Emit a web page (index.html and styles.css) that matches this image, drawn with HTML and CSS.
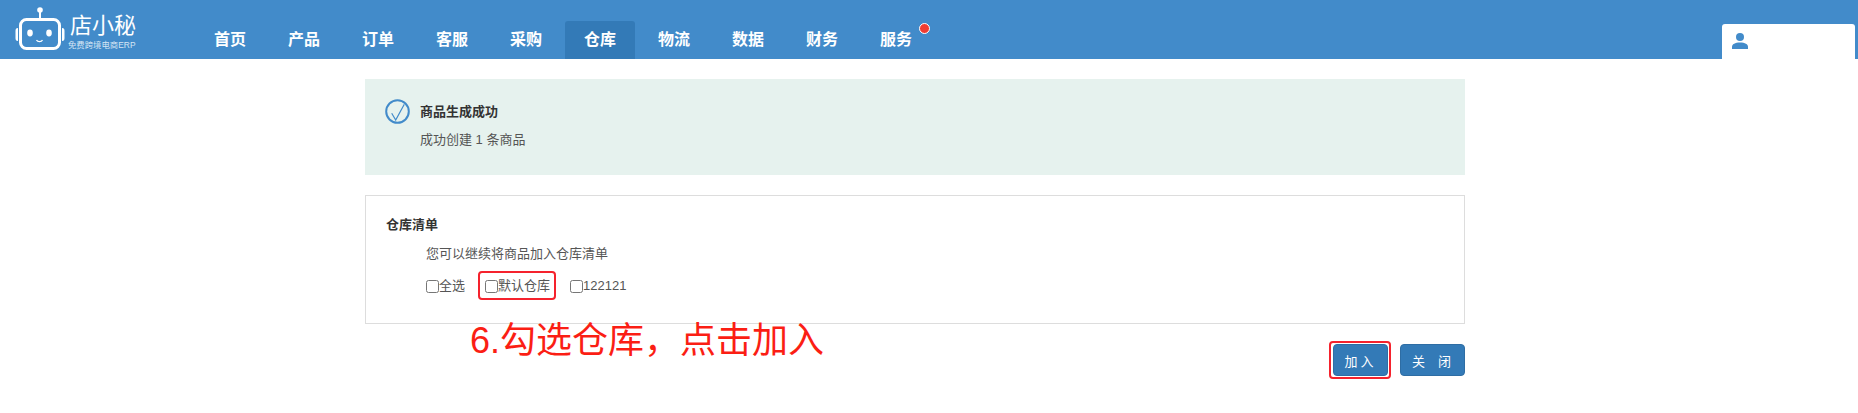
FILE: index.html
```html
<!DOCTYPE html>
<html lang="zh-CN">
<head>
  <meta charset="UTF-8" />
  <title>店小秘</title>
  <link rel="stylesheet" href="styles.css">
</head>
<body>
  <header class="topbar">
    <a class="logo">
      <svg class="logo-icon" width="54" height="46" viewBox="0 0 54 46">
        <circle cx="25" cy="5" r="2.800" fill="#fff"/>
        <path d="M25 6v8" stroke="#fff" stroke-width="2" fill="none"/>
        <rect x="5.500" y="14.500" width="39" height="29" rx="6" fill="none" stroke="#fff" stroke-width="3"/>
        <path d="M3 23c-2 0-2.500 1-2.500 3v7c0 2 .5 3 2.500 3zM47 23c2 0 2.500 1 2.500 3v7c0 2-.5 3-2.500 3z" fill="#fff"/>
        <ellipse cx="15" cy="28" rx="2.800" ry="3.400" fill="#fff"/>
        <ellipse cx="34" cy="28" rx="2.800" ry="3.400" fill="#fff"/>
        <path d="M21.500 35c1.200 2.200 4.800 2.200 6 0" stroke="#fff" stroke-width="1.300" fill="none"/>
      </svg>
      <span class="logo-text">
        <span class="logo-name">店小秘</span>
        <span class="logo-sub">免费跨境电商ERP</span>
      </span>
    </a>
    <nav class="nav">
      <a class="nav-item">首页</a>
      <a class="nav-item">产品</a>
      <a class="nav-item">订单</a>
      <a class="nav-item">客服</a>
      <a class="nav-item">采购</a>
      <a class="nav-item active">仓库</a>
      <a class="nav-item">物流</a>
      <a class="nav-item">数据</a>
      <a class="nav-item">财务</a>
      <a class="nav-item">服务<i class="dot"></i></a>
    </nav>
    <div class="user">
      <svg width="16" height="16" viewBox="0 0 16 16">
        <circle cx="8" cy="4" r="4" fill="#428bca"/>
        <path d="M0 16v-2c0-3 3-4.500 8-4.500s8 1.500 8 4.500v2z" fill="#428bca"/>
      </svg>
    </div>
  </header>

  <main class="content">
    <section class="success">
      <svg class="check" width="25" height="25" viewBox="0 0 25 25">
        <circle cx="12.500" cy="12.500" r="11.300" fill="none" stroke="#428bca" stroke-width="2"/>
        <path d="M6.700 14.300l4 6.700 8.600-15.700" fill="none" stroke="#428bca" stroke-width="1.200"/>
      </svg>
      <div>
        <div class="success-title">商品生成成功</div>
        <div class="success-text">成功创建 1 条商品</div>
      </div>
    </section>

    <section class="panel">
      <div class="panel-title">仓库清单</div>
      <div class="panel-body">
        <p class="hint">您可以继续将商品加入仓库清单</p>
        <div class="checks">
          <label class="check-item"><input type="checkbox">全选</label>
          <label class="check-item"><input type="checkbox">默认仓库<span class="mark mark-check"></span></label>
          <label class="check-item"><input type="checkbox">122121</label>
        </div>
      </div>
    </section>

    <div class="actions">
      <div class="btn-wrap">
        <button class="btn btn-add">加入</button>
        <span class="mark mark-btn"></span>
      </div>
      <button class="btn btn-close">关&nbsp;&nbsp;闭</button>
      <div class="note">6.勾选仓库，点击加入</div>
    </div>
  </main>
</body>
</html>
```

FILE: styles.css
```css
* {
  box-sizing: border-box;
}
body {
  margin: 0;
  background-color: #fff;
  color: #444;
  font-family: "Liberation Sans", "Noto Sans CJK SC", sans-serif;
  font-size: 13px;
}
.topbar {
  display: flex;
  height: 59px;
  background-color: #428bca;
  padding-left: 15px;
}
.logo {
  display: flex;
  width: 174px;
  padding-top: 5px;
  color: #fff;
}
.logo-icon {
  flex: none;
}
.logo-text {
  display: flex;
  flex-direction: column;
  margin-left: -1px;
}
.logo-name {
  height: 28px;
  margin-top: 7px;
  margin-left: 2px;
  font-size: 22px;
  line-height: 28px;
}
.logo-sub {
  font-size: 8.400px;
  line-height: 11px;
  white-space: nowrap;
  color: #d6e6f4;
}
.nav {
  display: flex;
  gap: 4px;
  margin-left: 6px;
  padding-top: 21px;
}
.nav-item {
  position: relative;
  width: 70px;
  height: 38px;
  line-height: 38px;
  text-align: center;
  font-size: 16px;
  font-weight: bold;
  color: #fff;
}
.nav-item.active {
  background-color: #337ab7;
  border-radius: 3px 3px 0 0;
}
.dot {
  position: absolute;
  top: 2px;
  left: 58px;
  width: 11px;
  height: 11px;
  border-radius: 50%;
  background-color: #f03c32;
  border: 1px solid #fff;
}
.user {
  margin-left: auto;
  margin-right: 3px;
  margin-top: 24px;
  width: 133px;
  height: 35px;
  padding: 9px 10px;
  background-color: #fff;
  border-radius: 3px 3px 0 0;
}
.content {
  width: 1100px;
  margin-left: 365px;
  padding: 20px 0 36px;
}
.success {
  display: flex;
  height: 96px;
  padding: 20px;
  gap: 10px;
  background-color: #e6f2ee;
}
.check {
  flex: none;
}
.success-title {
  margin-top: 3px;
  font-weight: bold;
  line-height: 20px;
  color: #333;
}
.success-text {
  margin-top: 8px;
  line-height: 20px;
  color: #555;
}
.panel {
  height: 129px;
  margin-top: 20px;
  padding: 19px 20px;
  border: 1px solid #ddd;
}
.panel-title {
  font-weight: bold;
  line-height: 20px;
  color: #333;
}
.panel-body {
  padding-left: 40px;
}
.hint {
  margin: 9px 0 0;
  line-height: 20px;
  color: #555;
}
.checks {
  display: flex;
  gap: 20px;
  margin-top: 12px;
  line-height: 20px;
  color: #555;
}
.check-item {
  position: relative;
  display: flex;
  align-items: center;
}
.check-item input {
  width: 13px;
  height: 13px;
  margin: 0;
}
.mark {
  position: absolute;
  border: 2px solid #f5222d;
  border-radius: 4px;
}
.mark-check {
  left: -7px;
  right: -6px;
  top: -5px;
  bottom: -4px;
}
.mark-btn {
  left: -4px;
  right: -3px;
  top: -3px;
  bottom: -3px;
}
.actions {
  position: relative;
  display: flex;
  justify-content: flex-end;
  gap: 12px;
  margin-top: 20px;
}
.btn-wrap {
  position: relative;
  height: 32px;
}
.btn {
  height: 32px;
  padding: 0;
  border: 1px solid #2e6da4;
  border-radius: 4px;
  background-color: #337ab7;
  color: #fff;
  font-family: inherit;
  font-size: 13px;
  letter-spacing: 2px;
}
.btn-add {
  display: block;
  width: 55px;
  letter-spacing: 3px;
}
.btn-close {
  width: 65px;
}
.note {
  position: absolute;
  left: 105px;
  top: -25px;
  font-size: 36px;
  line-height: 44px;
  color: #fb1e14;
  white-space: nowrap;
}
```
